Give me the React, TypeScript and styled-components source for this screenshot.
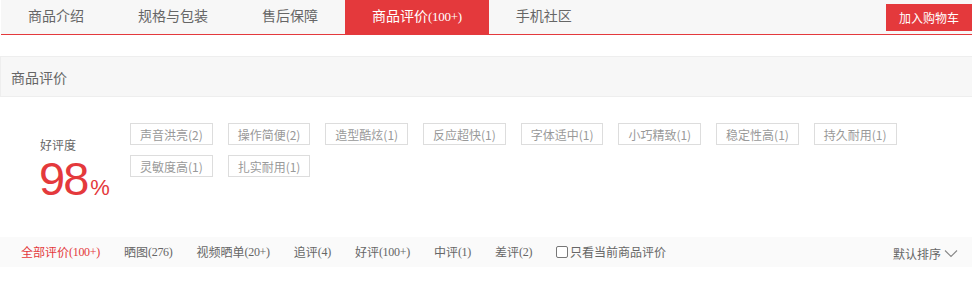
import React from "react";
import styled, { createGlobalStyle } from "styled-components";

const Global = createGlobalStyle`
  html, body { margin: 0; padding: 0; background: #fff; }
  body { font-family: "Noto Sans CJK SC", "Liberation Sans", sans-serif; }
  * { box-sizing: border-box; }
`;

const RED = "#e4393c";
const SERIF = `"Liberation Serif", "Noto Sans CJK SC", serif`;

const Page = styled.div`
  width: 972px;
`;

const TabBar = styled.div`
  display: flex;
  align-items: flex-start;
  height: 35px;
  background: #f7f7f7;
  border-bottom: 1px solid ${RED};
  margin-left: 1px;
`;

const Tab = styled.div<{ $active?: boolean }>`
  height: ${(p) => (p.$active ? "35px" : "34px")};
  line-height: 34px;
  padding: 0 27px;
  font-size: 14px;
  font-family: ${SERIF};
  color: ${(p) => (p.$active ? "#fff" : "#666")};
  background: ${(p) => (p.$active ? RED : "transparent")};
  white-space: nowrap;
`;

const Count = styled.span<{ $size?: number }>`
  font-family: ${SERIF};
  font-size: ${(p) => p.$size ?? 12}px;
  letter-spacing: -0.3px;
`;

const CartButton = styled.div`
  margin-left: auto;
  margin-top: 4px;
  width: 86px;
  height: 27px;
  background: ${RED};
  color: #fff;
  font-size: 12px;
  display: flex;
  align-items: center;
  justify-content: center;
`;

const SectionHeader = styled.div`
  margin-top: 21px;
  height: 41px;
  background: #f7f7f7;
  border: 1px solid #eee;
  border-right: none;
  display: flex;
  align-items: center;
  padding-left: 10px;
  font-size: 14px;
  font-family: ${SERIF};
  color: #666;
`;

const RateSection = styled.div`
  height: 140px;
  display: flex;
  padding: 26px 0 0 40px;
`;

const RateBox = styled.div`
  width: 90px;
  padding-top: 15px;
  display: flex;
  flex-direction: column;
`;

const RateLabel = styled.div`
  font-size: 12px;
  line-height: 14px;
  height: 14px;
  color: #666;
`;

const RateValue = styled.div`
  color: ${RED};
  font-family: "Liberation Sans", Arial, sans-serif;
  font-size: 47px;
  line-height: 54px;
  letter-spacing: -2px;
  margin-left: -1px;
  white-space: nowrap;
`;

const Percent = styled.span`
  font-size: 22px;
  letter-spacing: 0;
  margin-left: 3px;
`;

const TagList = styled.div`
  display: flex;
  flex-wrap: wrap;
  align-content: flex-start;
  width: 790px;
  row-gap: 10px;
  column-gap: 15px;
`;

const Tag = styled.div`
  height: 22px;
  padding: 0 7px;
  min-width: 82.7px;
  border: 1px solid #ddd;
  color: #999;
  font-size: 12px;
  display: flex;
  align-items: center;
  justify-content: center;
  white-space: nowrap;
`;

const FilterBar = styled.div`
  height: 30px;
  background: #fafafa;
  display: flex;
  align-items: center;
  padding-left: 21px;
  padding-right: 14px;
`;

const FilterItem = styled.div<{ $active?: boolean }>`
  font-size: 12px;
  font-family: ${SERIF};
  color: ${(p) => (p.$active ? RED : "#666")};
  margin-right: 24px;
  white-space: nowrap;
  display: flex;
  align-items: center;
`;

const Check = styled.span`
  display: inline-block;
  width: 12px;
  height: 12px;
  border: 1px solid #777;
  border-radius: 2px;
  margin-right: 2px;
  background: #fff;
`;

const Sort = styled.div`
  margin-left: auto;
  font-size: 12px;
  color: #666;
  display: flex;
  align-items: center;
  gap: 3px;
  margin-top: 3px;
`;

const tags = [
  "声音洪亮(2)",
  "操作简便(2)",
  "造型酷炫(1)",
  "反应超快(1)",
  "字体适中(1)",
  "小巧精致(1)",
  "稳定性高(1)",
  "持久耐用(1)",
  "灵敏度高(1)",
  "扎实耐用(1)",
];

const filters: [string, string, boolean?][] = [
  ["全部评价", "(100+)", true],
  ["晒图", "(276)"],
  ["视频晒单", "(20+)"],
  ["追评", "(4)"],
  ["好评", "(100+)"],
  ["中评", "(1)"],
  ["差评", "(2)"],
];

export default function App() {
  return (
    <Page>
      <Global />
      <TabBar>
        <Tab>商品介绍</Tab>
        <Tab>规格与包装</Tab>
        <Tab>售后保障</Tab>
        <Tab $active>
          商品评价<Count $size={13}>(100+)</Count>
        </Tab>
        <Tab>手机社区</Tab>
        <CartButton>加入购物车</CartButton>
      </TabBar>
      <SectionHeader>商品评价</SectionHeader>
      <RateSection>
        <RateBox>
          <RateLabel>好评度</RateLabel>
          <RateValue>
            98<Percent>%</Percent>
          </RateValue>
        </RateBox>
        <TagList>
          {tags.map((t) => (
            <Tag key={t}>{t}</Tag>
          ))}
        </TagList>
      </RateSection>
      <FilterBar>
        {filters.map(([label, count, active]) => (
          <FilterItem key={label} $active={active}>
            {label}
            <Count>{count}</Count>
          </FilterItem>
        ))}
        <FilterItem>
          <Check />
          只看当前商品评价
        </FilterItem>
        <Sort>
          默认排序
          <svg width="14" height="9" viewBox="0 0 14 9">
            <path d="M1 1.5 L7 7.5 L13 1.5" fill="none" stroke="#888" strokeWidth="1.1" />
          </svg>
        </Sort>
      </FilterBar>
    </Page>
  );
}
